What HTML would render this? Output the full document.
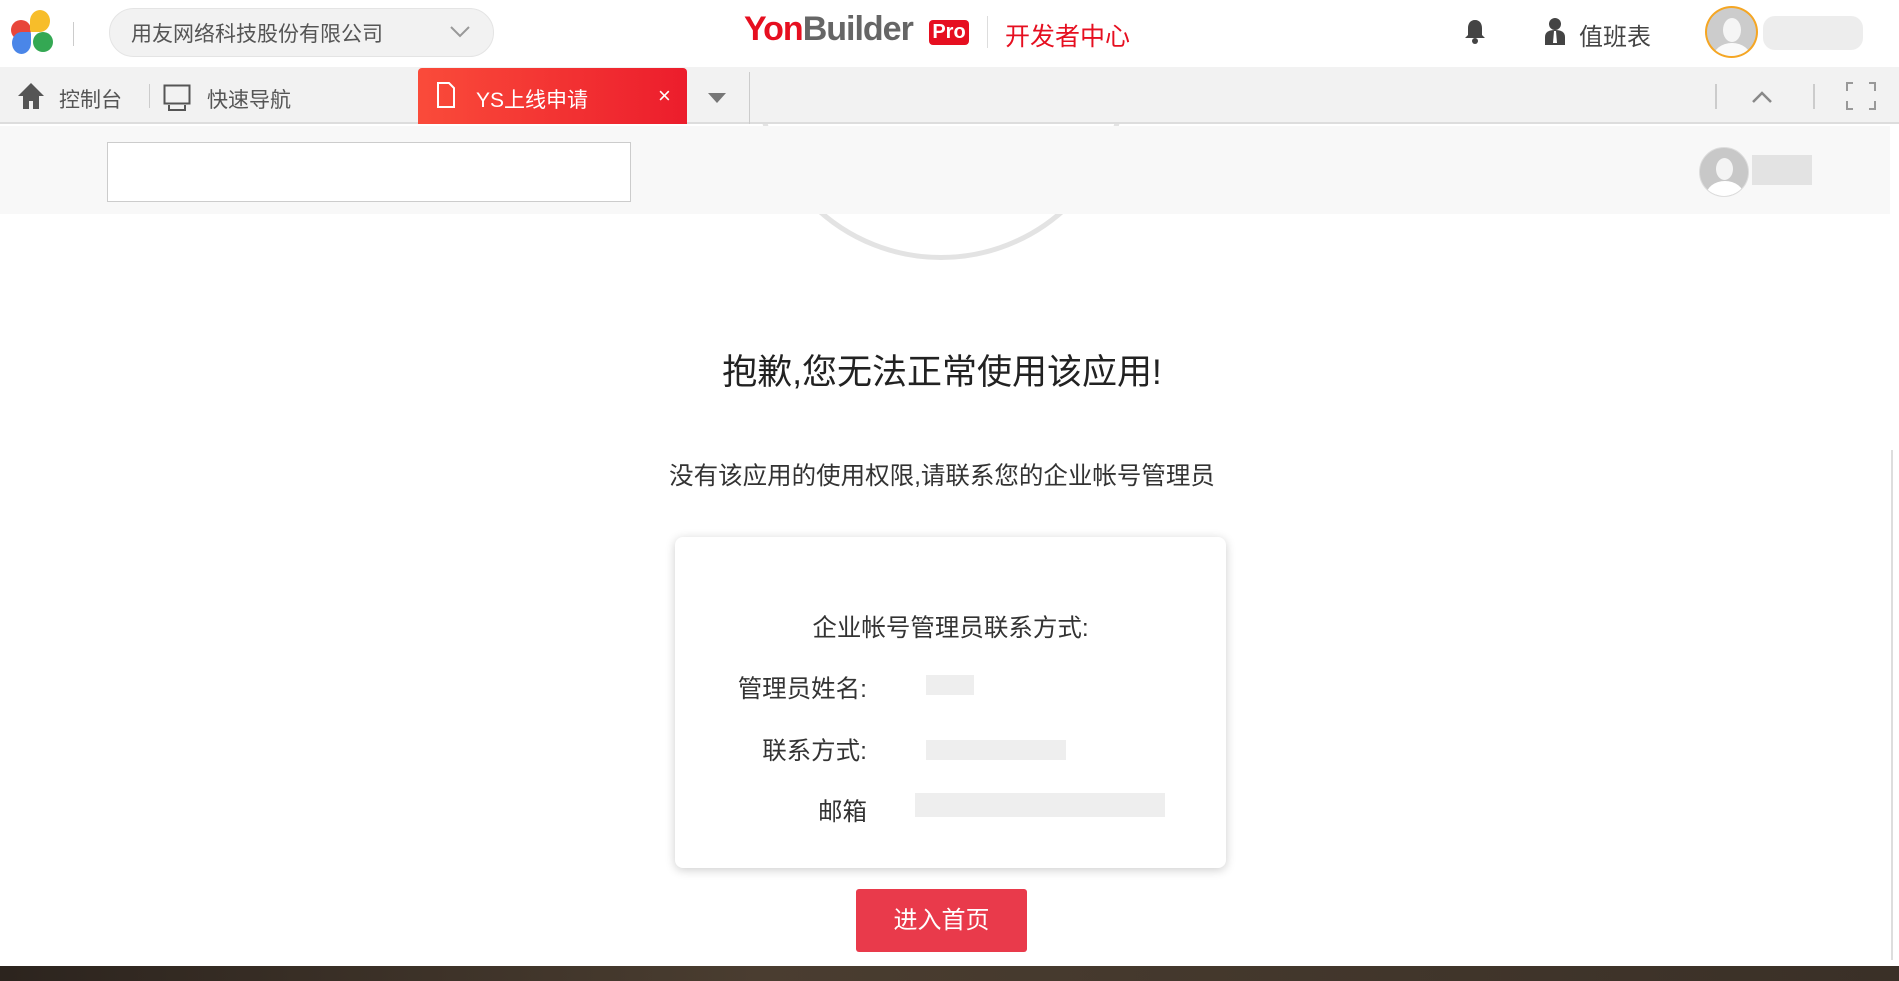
<!DOCTYPE html><html><head><meta charset="utf-8"><style>
*{margin:0;padding:0;box-sizing:border-box}
body{width:1899px;height:981px;overflow:hidden;background:#fff;font-family:"Liberation Sans","Noto Sans CJK SC",sans-serif;position:relative;color:#333}
.a{position:absolute}
</style></head><body>
<div class="a" style="left:756px;top:-110px;width:370px;height:370px;border-radius:50%;border:5px solid #e3e3e3;background:#fff"></div>
<div class="a" style="left:0;top:0;width:1899px;height:67px;background:#fff"></div>
<div class="a" style="left:11px;top:20px;width:20px;height:20px;border-radius:50%;background:#e8463a"></div>
<div class="a" style="left:30px;top:10px;width:20px;height:22px;border-radius:50% 50% 50% 10%;background:#f7bd2a"></div>
<div class="a" style="left:12px;top:32px;width:19px;height:22px;border-radius:50% 10% 50% 50%;background:#4a86e8"></div>
<div class="a" style="left:33px;top:32px;width:20px;height:20px;border-radius:50%;background:#34a853"></div>
<div class="a" style="left:73px;top:22px;width:1px;height:24px;background:#ccc"></div>
<div class="a" style="left:109px;top:8px;width:385px;height:49px;border-radius:25px;background:#f2f2f2;border:1px solid #e4e4e4"></div>
<div class="a" style="left:131px;top:18px;font-size:21px;color:#555">用友网络科技股份有限公司</div>
<svg class="a" style="left:449px;top:24px" width="22" height="16"><path d="M2 3l9 9 9-9" fill="none" stroke="#999" stroke-width="2"/></svg>
<div class="a" style="left:744px;top:10px;font-size:34px;font-weight:bold;letter-spacing:-1px"><span style="color:#e60f20">Yon</span><span style="color:#666">Builder</span></div>
<div class="a" style="left:929px;top:20px;width:40px;height:25px;background:#e60f20;border-radius:4px;color:#fff;font-weight:bold;font-size:20px;line-height:25px;text-align:center">Pro</div>
<div class="a" style="left:987px;top:16px;width:1px;height:32px;background:#ddd"></div>
<div class="a" style="left:1005px;top:17px;font-size:25px;color:#e60f20">开发者中心</div>
<svg class="a" style="left:1464px;top:18px" width="22" height="26"><path d="M11 2c-5 0-7 4-7 8v7l-3 3h20l-3-3v-7c0-4-2-8-7-8z" fill="#444"/><circle cx="11" cy="23" r="3" fill="#444"/></svg>
<svg class="a" style="left:1544px;top:16px" width="22" height="30"><circle cx="11" cy="8" r="6" fill="#444"/><path d="M1 29v-8c0-5 4-7 10-7s10 2 10 7v8z" fill="#444"/><path d="M10 15h2l1 12h-4z" fill="#fff"/></svg>
<div class="a" style="left:1579px;top:17px;font-size:24px;color:#444">值班表</div>
<div class="a" style="left:1705px;top:6px;width:53px;height:52px;border-radius:50%;border:2px solid #f5a623;background:#ccc;overflow:hidden"><div style="position:absolute;left:16px;top:10px;width:18px;height:24px;border-radius:50%;background:#fff;opacity:.8"></div><div style="position:absolute;left:6px;top:35px;width:38px;height:30px;border-radius:50%;background:#fff;opacity:.9"></div></div>
<div class="a" style="left:1763px;top:16px;width:100px;height:34px;background:#e8e8e8;border-radius:12px;opacity:.8"></div>
<div class="a" style="left:0;top:67px;width:1899px;height:57px;background:#f2f2f2;border-bottom:2px solid #ddd"></div>
<svg class="a" style="left:17px;top:82px" width="28" height="28"><path d="M14 1L1 14h5v13h6v-8h4v8h6V14h5z" fill="#555"/></svg>
<div class="a" style="left:59px;top:84px;font-size:21px;color:#555">控制台</div>
<div class="a" style="left:149px;top:84px;width:1px;height:24px;background:#ccc"></div>
<svg class="a" style="left:163px;top:84px" width="28" height="28"><rect x="1.5" y="1.5" width="25" height="18" fill="none" stroke="#555" stroke-width="2"/><path d="M6 21v5h16v-5M10 26h8" fill="none" stroke="#555" stroke-width="2"/></svg>
<div class="a" style="left:207px;top:84px;font-size:21px;color:#555">快速导航</div>
<div class="a" style="left:418px;top:68px;width:269px;height:56px;background:linear-gradient(90deg,#fa4b3a,#ec1d2c);border-radius:4px 4px 0 0"></div>
<svg class="a" style="left:436px;top:81px" width="20" height="28"><path d="M2 2h11l5 5v19H2z" fill="none" stroke="#fff" stroke-width="2"/></svg>
<div class="a" style="left:476px;top:84px;font-size:21px;color:#fff">YS上线申请</div>
<div class="a" style="left:658px;top:83px;font-size:22px;color:#fff">×</div>
<svg class="a" style="left:707px;top:92px" width="20" height="12"><path d="M1 1h18l-9 10z" fill="#777"/></svg>
<div class="a" style="left:749px;top:72px;width:1px;height:52px;background:#ccc"></div>
<div class="a" style="left:1715px;top:84px;width:2px;height:25px;background:#ccc"></div>
<svg class="a" style="left:1751px;top:90px" width="22" height="14"><path d="M2 12l9-9 9 9" fill="none" stroke="#888" stroke-width="2.5"/></svg>
<div class="a" style="left:1813px;top:84px;width:2px;height:25px;background:#ccc"></div>
<svg class="a" style="left:1845px;top:81px" width="32" height="30"><path d="M2 10V2h6M30 10V2h-6M2 20v8h6M30 20v8h-6" fill="none" stroke="#999" stroke-width="2"/></svg>
<div class="a" style="left:0;top:126px;width:1890px;height:88px;background:#f8f8f8"></div>
<div class="a" style="left:107px;top:142px;width:524px;height:60px;background:#fff;border:1px solid #ccc"></div>
<div class="a" style="left:1699px;top:147px;width:50px;height:50px;border-radius:50%;background:#c8c8c8;border:1px solid #ddd;overflow:hidden"><div style="position:absolute;left:16px;top:10px;width:17px;height:22px;border-radius:50%;background:#fff;opacity:.8"></div><div style="position:absolute;left:6px;top:33px;width:38px;height:30px;border-radius:50%;background:#fff"></div></div>
<div class="a" style="left:1752px;top:155px;width:60px;height:30px;background:#ddd;opacity:.8"></div>
<div class="a" style="left:0;top:344px;width:1884px;text-align:center;font-size:35px;color:#222">抱歉,您无法正常使用该应用!</div>
<div class="a" style="left:0;top:457px;width:1884px;text-align:center;font-size:24.5px;color:#333">没有该应用的使用权限,请联系您的企业帐号管理员</div>
<div class="a" style="left:675px;top:537px;width:551px;height:331px;background:#fff;border-radius:8px;box-shadow:0 2px 10px rgba(0,0,0,.2)"></div>
<div class="a" style="left:675px;top:609px;width:551px;text-align:center;font-size:24.5px">企业帐号管理员联系方式:</div>
<div class="a" style="left:667px;top:670px;width:200px;text-align:right;font-size:24.5px">管理员姓名:</div>
<div class="a" style="left:667px;top:732px;width:200px;text-align:right;font-size:24.5px">联系方式:</div>
<div class="a" style="left:667px;top:793px;width:200px;text-align:right;font-size:24.5px">邮箱</div>
<div class="a" style="left:926px;top:675px;width:48px;height:20px;background:#eee"></div>
<div class="a" style="left:926px;top:740px;width:140px;height:20px;background:#eee"></div>
<div class="a" style="left:915px;top:793px;width:250px;height:24px;background:#eee"></div>
<div class="a" style="left:856px;top:889px;width:171px;height:63px;background:#e93a4b;border-radius:3px;color:#fff;font-size:24px;text-align:center;line-height:63px">进入首页</div>
<div class="a" style="left:0;top:966px;width:1899px;height:15px;background:linear-gradient(90deg,#2c241e,#4a3d30 40%,#3a3027)"></div>
<div class="a" style="left:1891px;top:450px;width:2px;height:510px;background:#ddd"></div>
</body></html>
